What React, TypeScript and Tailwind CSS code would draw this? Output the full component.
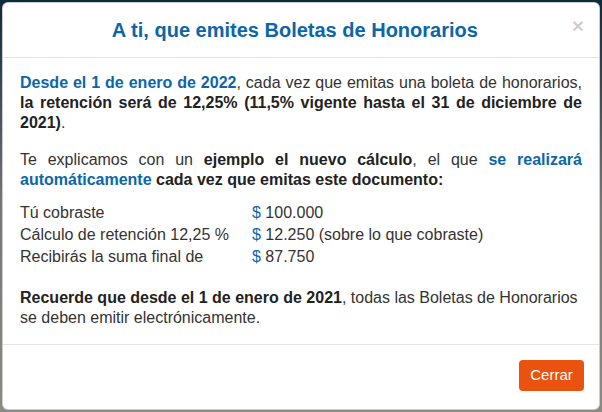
import React from "react";

// Types
type Row = {
	label: string;
	amount: string;
	note?: string;
};

const rows: Row[] = [
	{ label: "Tú cobraste", amount: "100.000" },
	{ label: "Cálculo de retención 12,25 %", amount: "12.250", note: " (sobre lo que cobraste)" },
	{ label: "Recibirás la suma final de", amount: "87.750" },
];

const App = () => {
	return (
		<div className="h-[412px] w-[602px] bg-linear-to-b from-[#0c2a3e] via-[#777] to-[#8c8a80] p-[2px] font-['Liberation_Sans',Arial,sans-serif]">
			<div className="flex h-[408px] w-[598px] flex-col rounded-[6px] border border-black/20 bg-white text-[#333]">
				{/* <Header> */}
				<div className="flex h-[55px] shrink-0 items-center border-b border-[#e5e5e5] px-[15px]">
					<h4 className="flex-1 text-center text-[20px] leading-[22px] font-bold text-[#0b66aa]">
						A ti, que emites Boletas de Honorarios
					</h4>
					<button className="-mt-[10px] text-[21px] leading-none font-bold text-black/20">×</button>
				</div>

				{/* <Body> */}
				<div className="flex-1 px-[17px] pt-[15px] text-[16px] leading-[20px]">
					<p className="text-justify">
						<b className="text-[#0b66aa]">Desde el 1 de enero de 2022</b>, cada vez que emitas una boleta de
						honorarios, <b className="text-[#222]">la retención será de 12,25% (11,5% vigente hasta el 31 de diciembre de 2021)</b>.
					</p>
					<p className="mt-[17px] text-justify">
						Te explicamos con un <b className="text-[#222]">ejemplo el nuevo cálculo</b>, el que{" "}
						<b className="text-[#0b66aa]">se realizará automáticamente</b>{" "}
						<b className="text-[#222]">cada vez que emitas este documento:</b>
					</p>
					<div className="mt-[12px] grid grid-cols-[232px_1fr]">
						{rows.map((row) => (
							<React.Fragment key={row.label}>
								<div className="leading-[22px]">{row.label}</div>
								<div className="leading-[22px]">
									<span className="text-[#0b66aa]">$</span> {row.amount}
									{row.note}
								</div>
							</React.Fragment>
						))}
					</div>
					<p className="mt-[20px]">
						<b className="text-[#222]">Recuerde que desde el 1 de enero de 2021</b>, todas las Boletas de Honorarios se
						deben emitir electrónicamente.
					</p>
				</div>

				{/* <Footer> */}
				<div className="flex h-[65px] shrink-0 items-start justify-end border-t border-[#e5e5e5] px-[15px] pt-[15px]">
					<button className="h-[31px] w-[65px] rounded-[4px] bg-[#e9520f] text-[15px] text-white">Cerrar</button>
				</div>
			</div>
		</div>
	);
};

export default App;
